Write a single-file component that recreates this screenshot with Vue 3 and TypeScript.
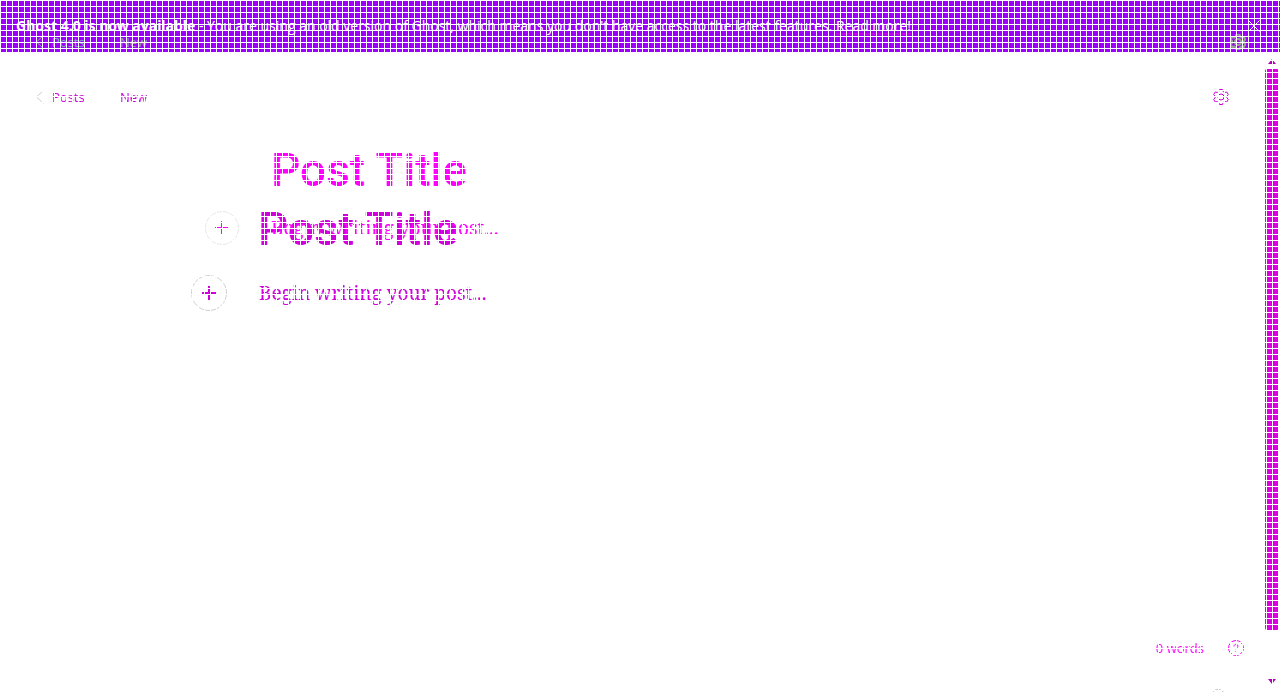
<script setup lang="ts">
import { ref } from 'vue'

const title = ref('')
const body = ref('')
const open = ref(true)
const gear: string = 'M6.5.5h3l.6 2 1.700 1 2-.5 1.500 2.600-1.400 1.500v1.800l1.400 1.500-1.500 2.600-2-.5-1.700 1-.6 2h-3l-.6-2-1.700-1-2 .5L.7 10.400 2.100 8.900V7.100L.7 5.600 2.200 3l2 .5 1.700-1z'
</script>

<template>
  <div class="page">
    <aside v-if="open" class="banner">
      <p><strong>Ghost 4.0 is now available</strong> - You are using an old version of Ghost, which means you don't have access to the latest features. <a href="#">Read more!</a></p>
      <button class="close" type="button" aria-label="Close" @click="open = false">
        <svg viewBox="0 0 12 12"><path d="M.5.5l11 11M11.5.5l-11 11" /></svg>
      </button>
    </aside>

    <div class="body">
      <main class="editor">
        <header class="bar">
          <a class="back" href="#"><svg viewBox="0 0 8 14"><path d="M7.5.5l-7 6.500 7 6.500" /></svg>Posts</a>
          <span class="status">New</span>
          <button class="gear" type="button" aria-label="Settings"><svg viewBox="0 0 16 16"><path :d="gear" /><circle cx="8" cy="8" r="3" /></svg></button>
        </header>
        <section class="canvas">
          <input v-model="title" class="title" placeholder="Post Title" aria-label="Post title" />
          <div class="line">
            <button class="plus" type="button" aria-label="Add a card"><svg viewBox="0 0 14 14"><path d="M7 0v14M0 7h14" /></svg></button>
            <input v-model="body" class="text" placeholder="Begin writing your post..." aria-label="Post body" />
          </div>
        </section>
      </main>
      <div class="scroll"><i class="up"></i><i class="thumb"></i><i class="down"></i></div>
    </div>

    <div class="editor before">
      <header class="bar">
        <a class="back" href="#"><svg viewBox="0 0 8 14"><path d="M7.5.5l-7 6.500 7 6.500" /></svg>Posts</a>
        <span class="status">New</span>
        <button class="gear" type="button" aria-label="Settings"><svg viewBox="0 0 16 16"><path :d="gear" /><circle cx="8" cy="8" r="3" /></svg></button>
      </header>
      <section class="canvas">
        <input v-model="title" class="title" placeholder="Post Title" aria-label="Post title" />
        <div class="line">
          <button class="plus" type="button" aria-label="Add a card"><svg viewBox="0 0 14 14"><path d="M6.500 0v13M0 6.500h13" /></svg></button>
          <input v-model="body" class="text" placeholder="Begin writing your post..." aria-label="Post body" />
        </div>
      </section>
      <footer class="foot">
        <span>0 words</span>
        <button type="button" aria-label="Help"><svg viewBox="0 0 16 16"><circle cx="8" cy="8" r="7.5" /><path d="M6 6.500C6 3.500 10 3.500 10 6.300 10 8 8 7.800 8 9.500M8 11v1" /></svg></button>
      </footer>
    </div>

    <svg class="edge" viewBox="0 0 16 16" aria-hidden="true"><circle cx="8" cy="8" r="7.5" /></svg>
    <div class="mesh"></div>
  </div>
</template>

<style>
html, body { margin: 0; background: #fff; overflow: hidden; }
</style>

<style scoped>
* { box-sizing: border-box; }
.page { position: relative; display: flex; flex-direction: column; height: 100vh; overflow: hidden; background: #fff; font: 13px/20px "Open Sans", sans-serif; }
button { display: flex; align-items: center; justify-content: center; margin: 0; padding: 0; border: 0; background: none; color: inherit; }
svg { display: block; fill: none; stroke: currentColor; }
a { color: inherit; text-decoration: none; }
input { border: 0; padding: 0; margin: 0; background: none; outline: 0; min-width: 0; color: inherit; }
input::placeholder { color: inherit; opacity: 1; }
.banner { display: flex; align-items: center; justify-content: space-between; height: 52px; padding: 0 20px 0 16px; background: #9d00fa; color: #fff; font-size: 14px; }
.banner p { margin: 0; }
.banner strong { font-family: "Noto Sans", sans-serif; }
.banner a { text-decoration: underline #c800f0 2px; text-underline-offset: 2px; }
.close svg { width: 12px; height: 12px; }
.body { display: flex; flex: 1; min-height: 0; }
.editor { flex: 1; min-width: 0; color: #cf00dc; }
.bar { display: flex; align-items: center; height: 90px; padding: 0 35px 0 36px; }
.back { display: flex; align-items: center; gap: 8px; width: 84px; }
.back svg { width: 8px; height: 14px; color: #ccc; }
.gear { margin-left: auto; }
.gear svg { width: 16px; height: 16px; }
.canvas { display: flex; flex-direction: column; padding: 55px 180px 0 191px; }
.title { height: 64px; margin-left: 67px; font: 500 47px/64px Roboto, sans-serif; }
.line { display: flex; align-items: center; gap: 32px; margin-top: 12px; height: 40px; }
.plus { flex: none; width: 36px; height: 36px; border: 1px solid #d0d0d0; border-radius: 50%; }
.plus svg { width: 14px; height: 14px; stroke-width: 2; }
.text { flex: 1; height: 32px; font: 19px/32px "Noto Serif", "Liberation Serif", serif; }
.before { position: absolute; inset: 0 16px 0 0; display: flex; flex-direction: column; color: #f0f; }
.before .bar { height: 84px; padding-right: 18px; color: #96a88c; }
.before .gear svg { stroke-width: 2; }
.before .back { color: #80b4c0; }
.before .back svg { color: #96a88c; }
.before .canvas { padding: 54px 180px 0 205px; }
.before .title { margin-left: 66px; font-size: 46px; }
.before .line { margin-top: 6px; gap: 32px; }
.before .plus { width: 34px; height: 34px; border-color: #e8e8e8; }
.before .plus svg { stroke-width: 1; }
.foot { display: flex; align-items: center; justify-content: flex-end; gap: 24px; height: 88px; margin-top: auto; padding-right: 20px; }
.foot svg { width: 16px; height: 16px; }
.scroll { display: flex; flex-direction: column; align-items: center; width: 16px; padding: 7px 1px 8px 1px; }
.up, .down { width: 0; height: 0; border: 4px solid transparent; }
.up { border-top: 0; border-bottom: 5px solid #b000b8; }
.down { border-bottom: 0; border-top: 5px solid #b000b8; margin-top: 49px; }
.thumb { width: 100%; flex: 1; margin-top: 5px; border-radius: 2px; background: #dc00e0; }
.edge { position: absolute; right: 54px; bottom: -13px; width: 16px; height: 16px; color: #bbb; }
.mesh { position: absolute; inset: 0; pointer-events: none; background: repeating-linear-gradient(90deg, #fff 0 1px, transparent 1px 6px), repeating-linear-gradient(#fff 0 1px, transparent 1px 6px); }
</style>
